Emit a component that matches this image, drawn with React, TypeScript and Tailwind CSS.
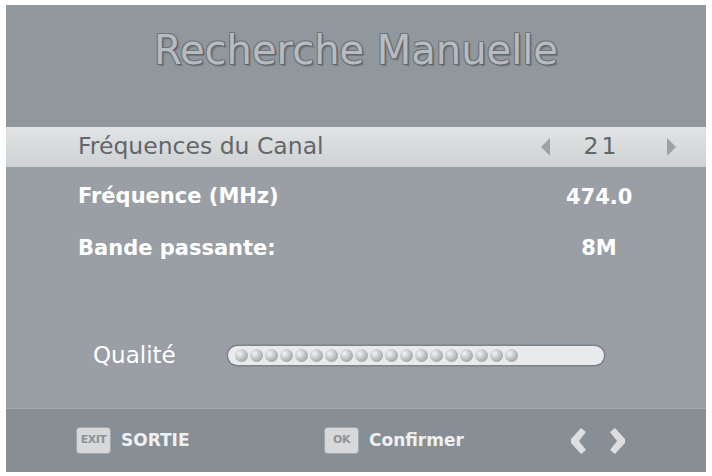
const dots = Array.from({ length: 19 }, (_, i) => i);

function SideArrow({ dir }: { dir: "left" | "right" }) {
  return (
    <svg width="11" height="20" viewBox="0 0 11 20">
      {dir === "left" ? (
        <polygon points="10,1 1,10 10,19" fill="#9ca1a5" />
      ) : (
        <polygon points="1,1 10,10 1,19" fill="#9ca1a5" />
      )}
    </svg>
  );
}

function Chevron({ dir }: { dir: "left" | "right" }) {
  return (
    <svg width="17" height="28" viewBox="0 0 17 28">
      {dir === "left" ? (
        <polygon points="11,1 16,5 9,14 16,23 11,27 1,16 1,12" fill="#dcdee0" />
      ) : (
        <polygon points="6,1 1,5 8,14 1,23 6,27 16,16 16,12" fill="#dcdee0" />
      )}
    </svg>
  );
}

function Key({ label }: { label: string }) {
  return (
    <span className="flex h-[25px] w-[33px] items-center justify-center rounded-[3px] bg-[#d6d8da] text-[11px] tracking-[-0.5px] text-[#8d9296] shadow-[0_0_0_1px_#a3a8ac]">
      {label}
    </span>
  );
}

export default function App() {
  return (
    <div className="h-[476px] w-[712px] bg-white pb-[4px] pl-[6px] pr-[6px] pt-[5px] font-['DejaVu_Sans',sans-serif]">
      <div className="flex h-full flex-col bg-[#999fa4]">
        <div className="flex h-[122px] items-start justify-center bg-[#91989d] pt-[21px]">
          <h1 className="text-[40px] font-medium leading-[48px] text-[#b8bcc0] [text-shadow:1px_1px_0_#5f666c,-1px_-1px_0_#6f767b,1px_-1px_0_#6f767b,-1px_1px_0_#6f767b,2px_2px_1px_#70777c]">
            Recherche Manuelle
          </h1>
        </div>

        <div className="flex h-[40px] items-center bg-[linear-gradient(#e1e3e4,#cfd2d4)] pl-[72px] pr-[29px] text-[23.5px] text-[#62676b]">
          <span className="flex-1">Fréquences du Canal</span>
          <SideArrow dir="left" />
          <span className="w-[115px] pr-[14px] text-center tracking-[3px]">21</span>
          <SideArrow dir="right" />
        </div>

        <div className="flex h-[56px] items-center pl-[72px] pr-[74px] text-[21px] font-bold text-white">
          <span className="flex-1 pt-[4px]">Fréquence (MHz)</span>
          <span className="w-[66px] pt-[6px] text-center">474.0</span>
        </div>
        <div className="flex h-[52px] items-center pl-[72px] pr-[74px] text-[21px] font-bold text-white">
          <span className="flex-1">Bande passante:</span>
          <span className="w-[66px] text-center">8M</span>
        </div>

        <div className="flex flex-1 items-center gap-[52px] pl-[87px] pt-[27px]">
          <span className="text-[23px] text-white">Qualité</span>
          <div className="flex h-[19px] w-[376px] items-center gap-[2px] rounded-full bg-[#e8eaeb] px-[7px] shadow-[0_0_0_1.5px_#7c8388]">
            {dots.map((d) => (
              <span
                key={d}
                className="h-[13px] w-[13px] rounded-full bg-[radial-gradient(circle_at_35%_35%,#f2f3f4,#a7abae_70%,#8a8f93)]"
              />
            ))}
          </div>
        </div>

        <div className="flex h-[64px] items-center border-t border-[#a4aaae] bg-[#878e94] pl-[71px] text-[17px] font-bold text-[#eef0f1]">
          <div className="flex w-[248px] items-center gap-[11px]">
            <Key label="EXIT" />
            <span>SORTIE</span>
          </div>
          <div className="flex w-[245px] items-center gap-[11px]">
            <Key label="OK" />
            <span>Confirmer</span>
          </div>
          <div className="flex items-center gap-[22px]">
            <Chevron dir="left" />
            <Chevron dir="right" />
          </div>
        </div>
      </div>
    </div>
  );
}
